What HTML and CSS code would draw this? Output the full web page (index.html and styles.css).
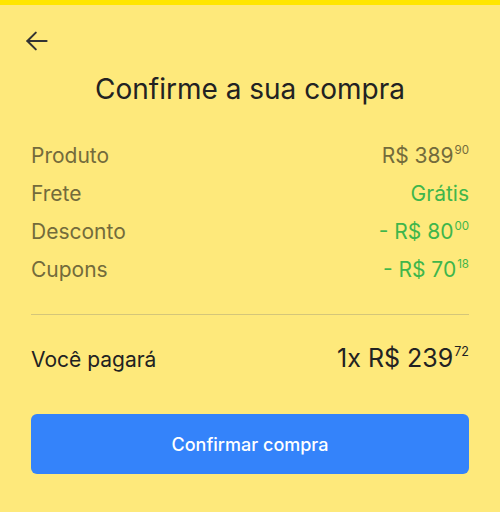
FILE: index.html
```html
<!DOCTYPE html>
<html lang="pt-BR">
<head>
    <meta charset="UTF-8">
    <meta name="viewport" content="width=device-width, initial-scale=1.0">
    <title>Confirme a sua compra</title>
    <link rel="stylesheet" href="styles.css">
</head>
<body>
    <div class="topbar"></div>
    <div class="sheet">
        <a class="back" href="#" aria-label="Voltar">
            <svg width="24" height="24" viewBox="2 2 20 20" fill="none" stroke="#333" stroke-width="1.7" stroke-linecap="round" stroke-linejoin="round">
                <path d="M20 12H4"/>
                <path d="M11 5l-7 7 7 7"/>
            </svg>
        </a>
        <h1 class="title">Confirme a sua compra</h1>

        <div class="summary">
            <div class="row">
                <span class="label">Produto</span>
                <span class="value">R$ 389<sup>90</sup></span>
            </div>
            <div class="row">
                <span class="label">Frete</span>
                <span class="value green">Grátis</span>
            </div>
            <div class="row">
                <span class="label">Desconto</span>
                <span class="value green">- R$ 80<sup>00</sup></span>
            </div>
            <div class="row">
                <span class="label">Cupons</span>
                <span class="value green">- R$ 70<sup>18</sup></span>
            </div>
        </div>

        <div class="total">
            <span class="total-label">Você pagará</span>
            <span class="total-value">1x R$ 239<sup>72</sup></span>
        </div>

        <button class="confirm">Confirmar compra</button>
    </div>
</body>
</html>
```

FILE: styles.css
```css
body {
    margin: 0;
    font-family: Inter, "Open Sans", sans-serif;
    background-color: #fee97b;
    color: #222;
}
.topbar {
    height: 5px;
    background: #ffe600;
}
.sheet {
    padding: 0 31px;
}
.back {
    display: block;
    width: 24px;
    height: 24px;
    margin: 24px 0 0 -6px;
}
.back svg {
    display: block;
}
.title {
    margin: 19px 0 0;
    text-align: center;
    font-size: 28px;
    font-weight: 400;
    line-height: 34px;
    color: #222;
}
.summary {
    margin-top: 37px;
    padding-bottom: 19px;
    border-bottom: 1px solid #d4c67a;
}
.row {
    display: flex;
    justify-content: space-between;
    align-items: baseline;
    height: 38px;
    line-height: 26px;
    font-size: 21px;
}
.label,
.value {
    color: #736b3b;
}
.value.green {
    color: #3fb64b;
}
sup {
    font-size: 0.55em;
    vertical-align: 0;
    position: relative;
    top: -0.75em;
    margin-left: 1px;
}
.total {
    display: flex;
    justify-content: space-between;
    align-items: baseline;
    margin-top: 28px;
    line-height: 30px;
}
.total-label {
    font-size: 21px;
    color: #222;
}
.total-value {
    font-size: 25px;
    color: #222;
}
.total-value sup {
    font-size: 0.5em;
    top: -0.9em;
}
.confirm {
    display: block;
    width: 100%;
    height: 60px;
    margin-top: 36px;
    border: none;
    border-radius: 6px;
    background: #3483fa;
    color: #fff;
    font-family: inherit;
    font-size: 18px;
    font-weight: 500;
    cursor: pointer;
}
```
